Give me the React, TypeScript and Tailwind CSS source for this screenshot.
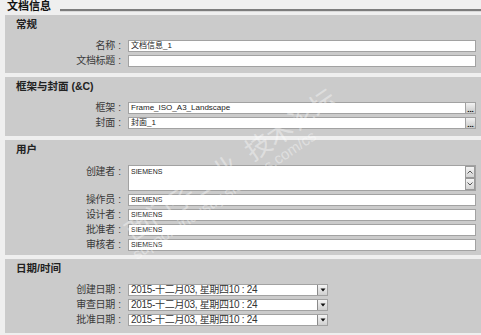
import React from "react";

const CJK = { fontFamily: '"Liberation Sans", "Noto Sans CJK SC", sans-serif' };

function Label({ text }: { text: string }) {
  return (
    <div className="w-[119px] shrink-0 flex justify-end items-center text-[10px] leading-[12px] text-[#3a3a3a] tracking-[-0.3px]">
      <span>{text}</span>
      <span className="inline-block w-[9px] text-center">:</span>
    </div>
  );
}

function TextRow({ label, value, ellipsis }: { label: string; value: string; ellipsis?: boolean }) {
  return (
    <div className="flex items-center h-[12px]">
      <Label text={label} />
      <div className="ml-[4px] mr-[5px] flex-1 h-[12px] bg-white border border-[#a2a2a2] flex items-center">
        <div className="flex-1 pl-[2px] text-[8px] leading-[10px] text-[#222] whitespace-nowrap overflow-hidden">
          {value}
        </div>
        {ellipsis && (
          <div className="w-[10px] h-[10px] bg-gradient-to-b from-[#f2f2f2] to-[#c8c8c8] border-l border-[#a2a2a2] flex items-end justify-center">
            <span className="text-[8px] leading-[6px] text-black font-bold">...</span>
          </div>
        )}
      </div>
    </div>
  );
}

function SiemensRow({ label }: { label: string }) {
  return (
    <div className="flex items-center h-[12px]">
      <Label text={label} />
      <div className="ml-[4px] mr-[5px] flex-1 h-[12px] bg-white border border-[#a2a2a2] flex items-center pl-[2px] text-[7px] leading-[10px] text-[#222]">
        SIEMENS
      </div>
    </div>
  );
}

function DateRow({ label }: { label: string }) {
  return (
    <div className="flex items-center h-[12px]">
      <Label text={label} />
      <div className="ml-[4px] w-[200px] h-[12px] bg-white border border-[#a2a2a2] flex items-center">
        <div className="flex-1 pl-[2px] text-[10px] leading-[10px] text-[#333] whitespace-nowrap overflow-hidden tracking-[-0.3px]">
          2015-十二月03, 星期四10 : 24
        </div>
        <div className="w-[10px] h-[10px] bg-gradient-to-b from-[#f4f4f4] to-[#d0d0d0] border-l border-[#8a8a8a] flex items-center justify-center">
          <svg width="6" height="4" viewBox="0 0 6 4">
            <path d="M0.5 0.5 H5.5 L3 3.5 Z" fill="#111" />
          </svg>
        </div>
      </div>
    </div>
  );
}

function Panel({ title, children, pb }: { title: string; children: React.ReactNode; pb: string }) {
  return (
    <div className={`bg-[#cbcbcb] pt-[2px] ${pb}`}>
      <div className="h-[14px] leading-[14px] pl-[11px] text-[10.5px] font-bold text-[#222]">{title}</div>
      <div className="mt-[9px] flex flex-col gap-[3px]">{children}</div>
    </div>
  );
}

export default function App() {
  return (
    <div className="relative w-[481px] h-[335px] bg-[#efefef] overflow-hidden" style={CJK}>
      <div className="h-[15px] flex items-start">
        <div className="pl-[7px] text-[11px] leading-[13px] font-bold text-[#111]">文档信息</div>
        <div className="flex-1 ml-[9px] mt-[9px] h-[3px] border-t-2 border-[#7c7c7c] border-b border-b-[#d8d8d8]" />
      </div>
      <div className="ml-[5px] flex flex-col gap-[4px]">
        <Panel title="常规" pb="pb-[6px]">
          <TextRow label="名称" value="文档信息_1" />
          <TextRow label="文档标题" value="" />
        </Panel>
        <Panel title="框架与封面 (&C)" pb="pb-[7px]">
          <TextRow label="框架" value="Frame_ISO_A3_Landscape" ellipsis />
          <TextRow label="封面" value="封面_1" ellipsis />
        </Panel>
        <Panel title="用户" pb="pb-[4px]">
          <div className="flex items-start h-[26px]">
            <div className="pt-[1px]">
              <Label text="创建者" />
            </div>
            <div className="ml-[4px] mr-[5px] flex-1 h-[26px] bg-white border border-[#a2a2a2] flex">
              <div className="flex-1 pl-[2px] pt-[1px] text-[7px] leading-[10px] text-[#222]">SIEMENS</div>
              <div className="w-[10px] flex flex-col">
                <div className="h-[12px] bg-gradient-to-b from-[#f4f4f4] to-[#d4d4d4] border border-[#9a9a9a] flex items-center justify-center">
                  <svg width="6" height="4" viewBox="0 0 6 4">
                    <path d="M0.5 3.5 L3 1 L5.5 3.5" fill="none" stroke="#555" strokeWidth="1" />
                  </svg>
                </div>
                <div className="h-[12px] bg-gradient-to-b from-[#f4f4f4] to-[#d4d4d4] border border-[#9a9a9a] flex items-center justify-center">
                  <svg width="6" height="4" viewBox="0 0 6 4">
                    <path d="M0.5 0.5 L3 3 L5.5 0.5" fill="none" stroke="#555" strokeWidth="1" />
                  </svg>
                </div>
              </div>
            </div>
          </div>
          <SiemensRow label="操作员" />
          <SiemensRow label="设计者" />
          <SiemensRow label="批准者" />
          <SiemensRow label="审核者" />
        </Panel>
        <Panel title="日期/时间" pb="pb-[7px]">
          <DateRow label="创建日期" />
          <DateRow label="审查日期" />
          <DateRow label="批准日期" />
        </Panel>
      </div>
      <div className="pointer-events-none absolute left-[128px] top-[222px] -rotate-[34deg] origin-left text-[26px] leading-[26px] text-white/40 whitespace-nowrap">
        西门子工业&nbsp;&nbsp;技术论坛
      </div>
      <div className="pointer-events-none absolute left-[134px] top-[248px] -rotate-[34deg] origin-left text-[15px] leading-[15px] text-white/40 whitespace-nowrap">
        support.industry.siemens.com/cs
      </div>
    </div>
  );
}
